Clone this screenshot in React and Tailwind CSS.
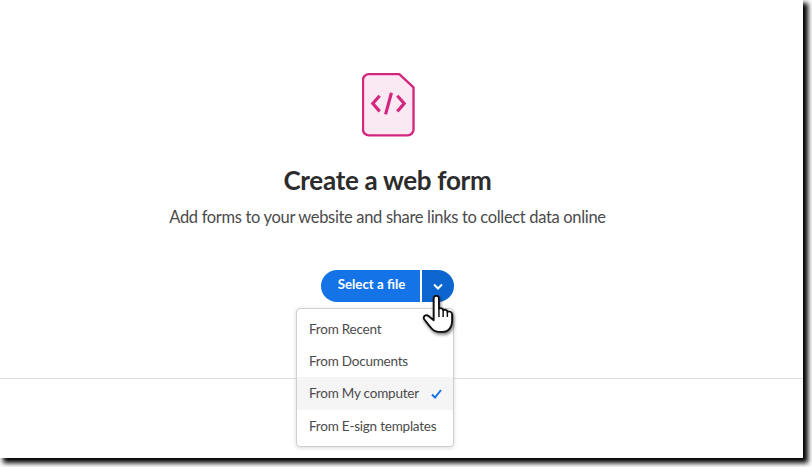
export default function App() {
  return (
    <div className="w-[812px] h-[467px] bg-white overflow-hidden font-['Lato',sans-serif]">
      <div className="w-[803px] h-[458px] bg-white shadow-[4px_4px_5px_1px_#000] flex flex-col">
        <div className="w-[775px] flex flex-col items-center pt-[72px]">
          <svg width="53" height="66" viewBox="0 0 54 66" className="block ml-[2px]">
            <path d="M7 1.5H38L52.5 15V58a6 6 0 0 1-6 6H7a6 6 0 0 1-6-6V7.5a6 6 0 0 1 6-6Z" fill="#FAE8F3" stroke="#D3277F" strokeWidth="2.4" strokeLinejoin="round" />
            <path d="M18 23.5 11 31.5 18 39.5M36 23.5 43 31.5 36 39.5M30 20.5 24 42.5" fill="none" stroke="#D3277F" strokeWidth="3.2" />
          </svg>
          <h1 className="mt-[24px] text-[26px] leading-[36px] font-bold text-[#2c2c2c] tracking-[-0.3px]">Create a web form</h1>
          <p className="mt-[7px] text-[16.5px] leading-[24px] text-[#4b4b4b] tracking-[-0.33px]">Add forms to your website and share links to collect data online</p>
          <div className="relative mt-[41px] flex gap-[2px]">
            <button className="w-[99px] h-[32px] rounded-l-full bg-[#1473e6] text-white text-[13.3px] font-bold pl-[2px] pb-[2px]">Select a file</button>
            <button className="w-[32px] h-[32px] rounded-r-full bg-[#0d66d0] flex items-center justify-center pr-[1px]">
              <svg width="10" height="7" viewBox="0 0 10 7"><path d="M1 1.5 5 5.5 9 1.5" fill="none" stroke="#fff" strokeWidth="2" /></svg>
            </button>
            <div className="absolute z-10 left-[-25px] top-[38px] w-[158px] bg-white border border-[#cfcfcf] rounded-[4px] shadow-[0_1px_4px_rgba(0,0,0,0.15)] py-[4px] text-[13.5px] tracking-[-0.22px] text-[#4b4b4b]">
              <div className="h-[32px] flex items-center px-[12px] whitespace-nowrap">From Recent</div>
              <div className="h-[32px] flex items-center px-[12px] whitespace-nowrap">From Documents</div>
              <div className="h-[33px] flex items-center justify-between px-[12px] bg-[#f5f5f5] whitespace-nowrap">
                From My computer
                <svg width="11" height="10" viewBox="0 0 11 10" className="mr-[-1px]"><path d="M1 5.5 4 8.5 10 1" fill="none" stroke="#1473e6" strokeWidth="2" /></svg>
              </div>
              <div className="h-[32px] flex items-center px-[12px] whitespace-nowrap">From E-sign templates</div>
            </div>
            <svg width="36" height="40" viewBox="0 0 34 38" className="absolute z-20 left-[101px] top-[25px] drop-shadow-[1px_2px_1.5px_rgba(0,0,0,0.5)]">
              <path d="M11 3c0-3 5-3 5 0V13c1.5-1 4-.5 4 1.5 1.5-1 4-.5 4 1.5 2-1 4.5 0 4.5 2.5V25c0 5-3 10-9 10h-4c-4 0-6-2-8-5L2 23c-1.5-2.5 1.5-5 4-3l5 4Z" fill="#fff" stroke="#111" strokeWidth="1.8" strokeLinejoin="round" />
              <path d="M16 13v8M20 14.5v6.5M24 16v5" fill="none" stroke="#111" strokeWidth="1.4" />
            </svg>
          </div>
        </div>
        <div className="mt-[76px] w-full h-px bg-[#dedede] shrink-0" />
      </div>
    </div>
  );
}
